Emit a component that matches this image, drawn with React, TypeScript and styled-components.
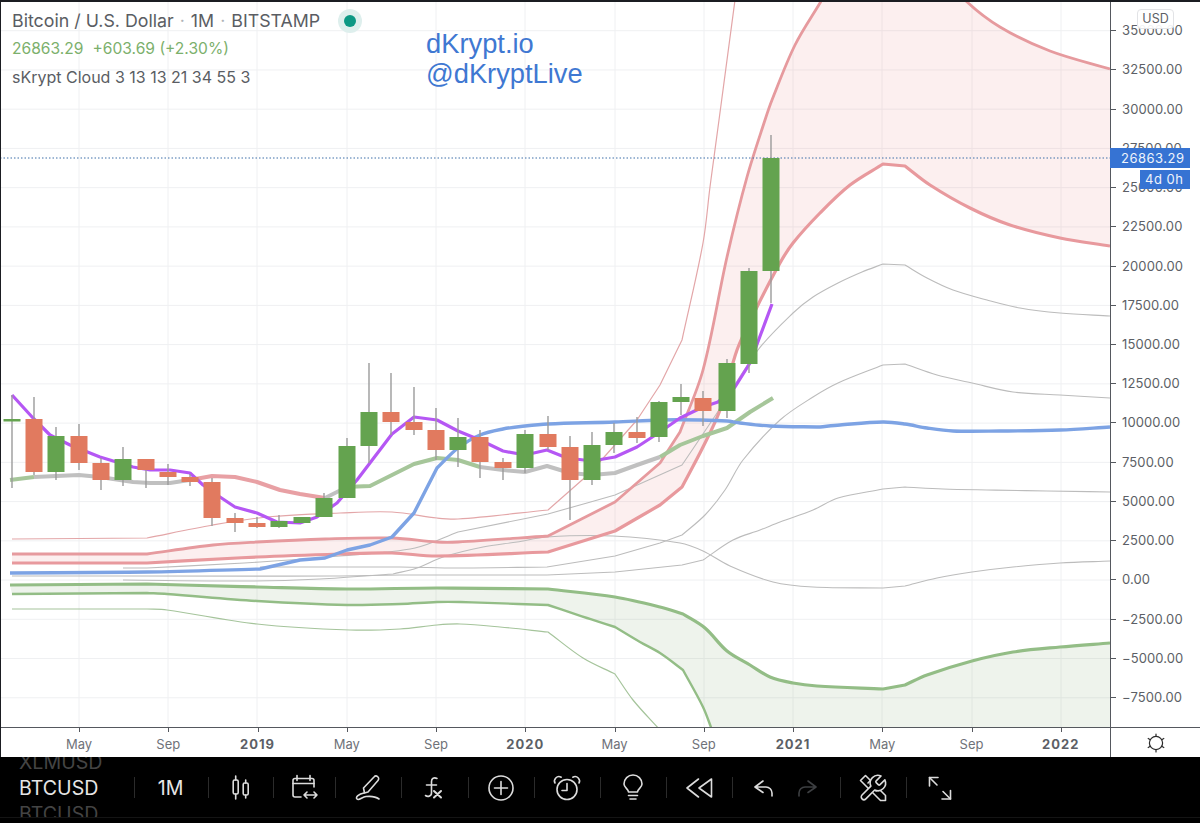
import React from "react";
import styled, { createGlobalStyle } from "styled-components";

const GlobalStyle = createGlobalStyle`
  html, body {
    margin: 0;
    padding: 0;
    background: #000;
    overflow: hidden;
  }
`;

const uiFont = `Inter, "Liberation Sans", sans-serif`;

const Screen = styled.div`
  width: 1200px;
  height: 823px;
  display: flex;
  flex-direction: column;
  background: #fff;
  font-family: ${uiFont};
  overflow: hidden;
`;

const Upper = styled.div`
  display: flex;
  flex-direction: column;
  height: 757px;
  border-top: 2px solid #1b1d22;
  border-left: 1px solid #1b1d22;
  box-sizing: border-box;
`;

const ChartRow = styled.div`
  display: flex;
  height: 725px;
`;

const Plot = styled.div`
  position: relative;
  width: 1109px;
  height: 725px;
  border-right: 1px solid #55585e;
`;

const Canvas = styled.svg`
  display: block;
`;

const Legend = styled.div`
  position: absolute;
  left: 11px;
  top: 8px;
  display: flex;
  flex-direction: column;
  color: #5a5d63;
`;

const TitleRow = styled.div`
  display: flex;
  align-items: center;
  height: 21px;
  font-size: 17.8px;
  white-space: nowrap;
`;

const Sep = styled.span`
  margin: 0 6px;
  color: #b0b3b8;
`;

const StatusDot = styled.span`
  width: 12px;
  height: 12px;
  margin-left: 24px;
  border-radius: 50%;
  background: #0d9884;
  box-shadow: 0 0 0 6px #deefed;
`;

const PriceRow = styled.div`
  display: flex;
  gap: 9px;
  margin-top: 8px;
  height: 18px;
  align-items: center;
  font-size: 15.6px;
  color: #7cb06c;
`;

const IndicatorRow = styled.div`
  margin-top: 11px;
  height: 18px;
  line-height: 18px;
  font-size: 16px;
  color: #5a5d63;
`;

const Watermark = styled.div`
  position: absolute;
  left: 425px;
  top: 27px;
  font-family: "Liberation Sans", Arial, sans-serif;
  font-size: 27.3px;
  line-height: 30px;
  color: #3f78d2;
`;

const PriceScale = styled.div`
  position: relative;
  flex: 1;
  padding-top: 9.1px;
`;

const PriceTick = styled.div`
  position: relative;
  height: 39.24px;
  line-height: 39.24px;
  padding-left: 11px;
  font-size: 13px;
  letter-spacing: 0.1px;
  color: #5c5f66;

  &::before {
    content: "";
    position: absolute;
    left: 0;
    top: 19px;
    width: 5px;
    height: 1px;
    background: #55585e;
  }
`;

const CurrencyBadge = styled.div`
  position: absolute;
  left: 26px;
  top: 7px;
  width: 37px;
  height: 20px;
  box-sizing: border-box;
  border: 1px solid #e2e3e6;
  border-radius: 4px;
  background: rgba(255, 255, 255, 0.92);
  font-size: 12.5px;
  line-height: 18px;
  text-align: center;
  color: #5c5f66;
`;

const PriceTag = styled.div<{ $wide?: boolean }>`
  position: absolute;
  right: 10px;
  top: ${(p) => (p.$wide ? "146px" : "168px")};
  width: ${(p) => (p.$wide ? "80px" : "50px")};
  height: ${(p) => (p.$wide ? "20px" : "19px")};
  line-height: ${(p) => (p.$wide ? "20px" : "19px")};
  box-sizing: border-box;
  padding-left: ${(p) => (p.$wide ? "11px" : "5px")};
  background: #3673d3;
  font-size: 13px;
  letter-spacing: 0.5px;
  color: #eef3fb;
`;

const TimeRow = styled.div`
  display: flex;
  height: 30px;
  border-top: 1.5px solid #55585e;
  box-sizing: border-box;
`;

const TimeAxis = styled.div`
  display: grid;
  grid-template-columns: repeat(12, 89.25px);
  width: 1110px;
  padding-left: 33.4px;
  box-sizing: border-box;
  border-right: 1px solid #55585e;
`;

const TimeLabel = styled.div<{ $year?: boolean }>`
  position: relative;
  padding-top: 9px;
  text-align: center;
  font-size: 13px;
  line-height: 15px;
  font-weight: ${(p) => (p.$year ? 700 : 400)};
  letter-spacing: ${(p) => (p.$year ? "1px" : "0")};
  color: ${(p) => (p.$year ? "#5c5f66" : "#6f7279")};

  &::before {
    content: "";
    position: absolute;
    left: 50%;
    top: 0;
    width: 1px;
    height: 4px;
    background: #55585e;
  }
`;

const SettingsCell = styled.div`
  flex: 1;
  display: flex;
  align-items: center;
  justify-content: center;
`;

const Toolbar = styled.div`
  height: 66px;
  background: #000;
`;

const Strip = styled.div`
  display: flex;
  align-items: center;
  height: 61px;
  border-bottom: 1px solid #141414;
  box-sizing: border-box;
`;

const SymbolRoller = styled.div`
  width: 134px;
  height: 100%;
  padding-left: 19px;
  padding-top: 1px;
  box-sizing: border-box;
  display: flex;
  flex-direction: column;
  justify-content: center;
  overflow: hidden;
  flex-shrink: 0;
`;

const SymbolLine = styled.div<{ $active?: boolean }>`
  flex-shrink: 0;
  height: 26px;
  line-height: 26px;
  font-size: 19.6px;
  color: ${(p) => (p.$active ? "#e6e6e6" : "#444")};
`;

const ToolCell = styled.div<{ $w: number }>`
  width: ${(p) => p.$w}px;
  box-sizing: border-box;
  padding-right: 2px;
  padding-top: 1px;
  flex-shrink: 0;
  display: flex;
  align-items: center;
  justify-content: center;
  gap: 11px;
  font-size: 19.6px;
  color: #e6e6e6;
`;

const Divider = styled.div`
  width: 1px;
  height: 21px;
  flex-shrink: 0;
  background: #2b2b2b;
`;

const ToolIcon = styled.svg<{ $dim?: boolean }>`
  display: block;
  flex-shrink: 0;
  fill: none;
  stroke: ${(p) => (p.$dim ? "#3d3f42" : "#dcdcdc")};
  stroke-width: 1.6;
  stroke-linecap: round;
  stroke-linejoin: round;
`;

const Wick = styled.line`
  stroke: #9b9b9b;
  stroke-width: 1.4;
`;

const CandleBody = styled.rect<{ $up: boolean }>`
  fill: ${(p) => (p.$up ? "#64a34f" : "#e17a5f")};
`;

const Series = styled.path<{ $color: string; $w: number }>`
  fill: none;
  stroke: ${(p) => p.$color};
  stroke-width: ${(p) => p.$w};
  stroke-linejoin: round;
`;

const Cloud = styled.path<{ $color: string }>`
  fill: ${(p) => p.$color};
`;

const GridLine = styled.line`
  stroke: #eff0f2;
  stroke-width: 1;
`;

const LastPriceLine = styled.line`
  stroke: #3d6fa8;
  stroke-width: 1;
  stroke-dasharray: 1.5 2;
`;

const priceY = Array.from({ length: 18 }, (_, i) => 30.7 + i * 39.24);
const priceLabels = [
  "35000.00", "32500.00", "30000.00", "27500.00", "25000.00", "22500.00",
  "20000.00", "17500.00", "15000.00", "12500.00", "10000.00", "7500.00",
  "5000.00", "2500.00", "0.00", "−2500.00", "−5000.00", "−7500.00",
];
const timeLabels = ["May", "Sep", "2019", "May", "Sep", "2020", "May", "Sep", "2021", "May", "Sep", "2022"];
const timeX = [79, 168, 257, 347, 436, 525, 615, 704, 793, 882, 972, 1061];

// x, body top, body bottom, wick top, wick bottom, up
const candles: [number, number, number, number, number, boolean][] = [
  [12, 419, 421.5, 395, 488, true],
  [34, 419, 472, 397, 475, false],
  [56, 436, 472, 427, 480, true],
  [79, 436, 463, 424, 470, false],
  [101, 463, 480, 458, 490, false],
  [123, 459, 480, 447, 486, true],
  [146, 459, 470, 459, 488, false],
  [168, 472, 477, 464, 485, false],
  [190, 477, 482, 474, 486, false],
  [212, 482, 518, 478, 526, false],
  [235, 518, 523, 513, 532, false],
  [257, 523, 527, 517, 528, false],
  [279, 521, 527, 515, 528, true],
  [302, 517, 523, 517, 523, true],
  [324, 498, 517, 493, 517, true],
  [347, 446, 498, 438, 498, true],
  [369, 412, 446, 363, 463, true],
  [391, 412, 422, 373, 435, false],
  [414, 422, 430, 387, 435, false],
  [436, 430, 450, 408, 460, false],
  [458, 437, 450, 418, 467, true],
  [480, 437, 462, 430, 478, false],
  [503, 462, 468, 458, 480, false],
  [525, 434, 468, 430, 473, true],
  [548, 434, 447, 416, 450, false],
  [570, 447, 480, 436, 520, false],
  [592, 445, 480, 432, 485, true],
  [614, 432, 445, 423, 453, true],
  [637, 432, 438, 417, 443, false],
  [659, 402, 437, 401, 442, true],
  [681, 397, 402, 384, 415, true],
  [703, 398, 411, 391, 426, false],
  [727, 363, 411, 359, 418, true],
  [749, 271, 364, 268, 373, true],
  [771, 158, 271, 135, 303, true],
];

// "|" marks a corner: the curve restarts from the point before it
const redUpper = "12,554 147,554|213,545 257,542 325,539 392,538 437,542 458,542 548,536|615,502|660,463|680,432|703,370 727,257 747,177 765,120 772,100 795,45 820,3 840,-30 883,-50 940,-30 965,0 1000,27 1050,51 1110,69";
const redLower = "12,563 147,563|257,557 340,554 392,553 437,556 548,552|615,531|660,505|682,487|703,447 720,410 737,350 757,307 780,263 793,243 820,213 850,185 883,164|905,166|930,185 970,208 1010,225 1060,238 1110,246";
const greenUpper = "10,585 147,584|257,587 347,589 437,588 548,589|615,597 660,607 683,614|705,628 727,651 750,665 770,677 793,683 817,686 883,689|905,685|927,675 972,661 1013,652 1060,647 1110,643";
const greenLower = "12,594 147,593|167,594 257,601 347,605 400,604 437,602 460,602 548,605|587,618 615,627|640,642 660,653 683,670|703,707 712,730";

const purple = "12,395 33,418 50,435 70,445 100,457 133,467 150,470 170,470 190,473 203,485 220,497 235,507 257,513 277,522 300,523 317,517 337,503 357,480 392,434 414,417 437,420 458,431 480,440 503,451 525,455 547,450 567,458 592,461 615,457 637,447 660,432 680,418 703,407 718,402 735,387 750,363 772,304";
const blue = "10,573 147,572 260,569|300,560|325,558|347,550|370,545|392,537|414,513|437,468|458,448 480,435 503,429 525,426 548,424 615,422 660,420 700,420 727,421 740,423 770,426 820,427|840,425 883,422 905,424 927,428 953,431 1000,431 1060,430 1110,427";
const midLine: [string, string][] = [
  ["10,480 34,477", "#a6c69a"],
  ["34,477 79,475 100,477 133,482 150,483 170,483 196,479", "#c0c0c0"],
  ["190,480 212,476 235,477 257,482 280,490 300,494 325,498", "#e8a0a4"],
  ["325,498 345,488", "#c0c0c0"],
  ["345,487 370,486 392,475 414,464 437,458 458,460 480,467", "#a6c69a"],
  ["480,467 503,470 525,472 547,466 570,473 592,475 615,473 637,465 660,457", "#c0c0c0"],
  ["660,457 680,445 703,436 727,428 750,412 773,398", "#a6c69a"],
];

const redThin = "12,539 147,538|213,525 267,517 340,513 392,512 437,518 458,519 548,510|590,473|637,420|660,385|682,340|703,243 710,187 719,120 735,0";
const greenThin = "12,609 147,609|167,610 257,624 350,630 400,629 437,625 460,624 500,627 548,632|583,658 615,674|633,700 660,730";
const greyLines = [
  "123,568 147,568|260,562 340,556 415,548 458,532|548,514|615,495|682,465|717,413 758,350 793,313 813,297 838,283 862,272 883,264|905,265|927,278 953,290 987,300 1020,308 1060,313 1110,316",
  "123,580 253,581 320,579 393,574|417,568 443,557 483,547 517,542 547,537 613,536 680,543 703,551 730,566 773,582 813,587 883,588|905,586|937,578 972,572 1013,567 1060,563 1110,561",
  "12,576 333,576 400,575 547,575|615,572|682,565|703,560|733,540 760,530 780,522 813,510 838,498 883,489|905,487|943,489 987,490 1047,491 1110,492",
  "260,567 400,567 457,568 547,567|615,556|660,543|682,535|705,515 725,490 743,460 780,420 813,397 838,383 883,365|905,364|937,375 972,383 1013,392 1060,395 1110,398",
];

type Pt = [number, number];

const parse = (s: string): Pt[] => s.trim().split(" ").map((p) => p.split(",").map(Number) as Pt);

const straight = (s: string) => "M" + s.replace(/ /g, " L");

function pieces(s: string): Pt[][] {
  const parts = s.split("|").map(parse);
  return parts.map((p, i) => (i ? [parts[i - 1][parts[i - 1].length - 1], ...p] : p));
}

function curve(pts: Pt[]) {
  let d = "";
  const tangent = (i: number): Pt => {
    const a = pts[Math.max(i - 1, 0)];
    const b = pts[Math.min(i + 1, pts.length - 1)];
    const len = Math.hypot(b[0] - a[0], b[1] - a[1]) || 1;
    return [(b[0] - a[0]) / len, (b[1] - a[1]) / len];
  };
  for (let i = 0; i < pts.length - 1; i++) {
    const p = pts[i];
    const q = pts[i + 1];
    const k = Math.hypot(q[0] - p[0], q[1] - p[1]) / 3;
    const t0 = tangent(i);
    const t1 = tangent(i + 1);
    d += ` C${p[0] + t0[0] * k},${p[1] + t0[1] * k} ${q[0] - t1[0] * k},${q[1] - t1[1] * k} ${q[0]},${q[1]}`;
  }
  return d;
}

const follow = (parts: Pt[][]) => parts.map(curve).join("");

function smooth(s: string) {
  const parts = pieces(s);
  return `M${parts[0][0][0]},${parts[0][0][1]}${follow(parts)}`;
}

// band between two curves: top edge forward, bottom edge back
function band(top: string, bottom: string, extra = "") {
  const back = pieces(bottom).reverse().map((p) => [...p].reverse());
  return `${smooth(top)}${extra} L${back[0][0][0]},${back[0][0][1]}${follow(back)} Z`;
}

function Icon({ children, dim }: { children: React.ReactNode; dim?: boolean }) {
  return (
    <ToolIcon width="32" height="32" viewBox="0 0 32 32" $dim={dim}>
      {children}
    </ToolIcon>
  );
}

function Chart() {
  return (
    <Canvas width="1109" height="725" viewBox="1 2 1109 725">
      {priceY.map((y) => (
        <GridLine key={y} x1="0" x2="1110" y1={y} y2={y} />
      ))}
      {timeX.map((x) => (
        <GridLine key={x} x1={x} x2={x} y1="0" y2="727" />
      ))}
      <Cloud d={band(redUpper, redLower)} $color="rgba(232, 130, 135, 0.13)" />
      <Cloud d={band(greenUpper, greenLower, " L1110,730")} $color="rgba(120, 165, 110, 0.13)" />

      {greyLines.map((line) => (
        <Series key={line} d={smooth(line)} $color="#bcbcbc" $w={1.1} />
      ))}
      <Series d={smooth(redThin)} $color="#e3a6a8" $w={1.2} />
      <Series d={smooth(greenThin)} $color="#a5c49b" $w={1.2} />
      <Series d={smooth(redUpper)} $color="#e69a9e" $w={2.8} />
      <Series d={smooth(redLower)} $color="#e8999d" $w={3.2} />
      <Series d={smooth(greenUpper)} $color="#93bd86" $w={3.2} />
      <Series d={smooth(greenLower)} $color="#93bd86" $w={2.4} />

      <LastPriceLine x1="0" x2="1110" y1="158" y2="158" />

      {midLine.map(([points, color]) => (
        <Series key={points} d={straight(points)} $color={color} $w={4} />
      ))}
      <Series d={smooth(blue)} $color="#7da3e4" $w={3.4} />
      <Series d={straight(purple)} $color="#b557f4" $w={3.2} />

      {candles.map(([x, top, bottom, wickTop, wickBottom, up]) => (
        <g key={x}>
          <Wick x1={x} x2={x} y1={wickTop} y2={wickBottom} />
          <CandleBody x={x - 8.5} y={top} width="17" height={bottom - top} $up={up} />
        </g>
      ))}
    </Canvas>
  );
}

function Gear() {
  return (
    <svg width="24" height="24" viewBox="0 0 24 24" fill="none" stroke="#2a2a2a" strokeWidth="1.2" strokeLinecap="round">
      <circle cx="12" cy="12" r="6.6" />
      <path d="M12 3v2.400M12 18.600V21M4.200 7.500l2.100 1.200M17.700 15.300l2.100 1.200M4.200 16.500l2.100-1.200M17.700 8.700l2.100-1.200" />
    </svg>
  );
}

export default function App() {
  return (
    <Screen>
      <GlobalStyle />
      <Upper>
        <ChartRow>
          <Plot>
            <Chart />
            <Legend>
              <TitleRow>
                Bitcoin / U.S. Dollar<Sep>·</Sep>1M<Sep>·</Sep>BITSTAMP
                <StatusDot />
              </TitleRow>
              <PriceRow>
                <span>26863.29</span>
                <span>+603.69 (+2.30%)</span>
              </PriceRow>
              <IndicatorRow>sKrypt Cloud 3 13 13 21 34 55 3</IndicatorRow>
            </Legend>
            <Watermark>
              dKrypt.io
              <br />
              @dKryptLive
            </Watermark>
          </Plot>
          <PriceScale>
            {priceLabels.map((label) => (
              <PriceTick key={label}>{label}</PriceTick>
            ))}
            <CurrencyBadge>USD</CurrencyBadge>
            <PriceTag $wide>26863.29</PriceTag>
            <PriceTag>4d 0h</PriceTag>
          </PriceScale>
        </ChartRow>
        <TimeRow>
          <TimeAxis>
            {timeLabels.map((label, i) => (
              <TimeLabel key={i} $year={label.startsWith("20")}>
                {label}
              </TimeLabel>
            ))}
          </TimeAxis>
          <SettingsCell>
            <Gear />
          </SettingsCell>
        </TimeRow>
      </Upper>
      <Toolbar>
        <Strip>
          <SymbolRoller>
            <SymbolLine>XLMUSD</SymbolLine>
            <SymbolLine $active>BTCUSD</SymbolLine>
            <SymbolLine>BTCUSD</SymbolLine>
          </SymbolRoller>
          <Divider />
          <ToolCell $w={73}>1M</ToolCell>
          <Divider />
          <ToolCell $w={64}>
            <Icon>
              <path d="M11.700 4v4M11.700 22v5M21.700 8v3M21.700 23v3" />
              <rect x="9.200" y="8" width="5" height="14" rx="1.500" />
              <rect x="19.200" y="11" width="5" height="12" rx="1.500" />
            </Icon>
          </ToolCell>
          <Divider />
          <ToolCell $w={61}>
            <Icon>
              <path d="M26 15V8.500a2 2 0 0 0-2-2H7a2 2 0 0 0-2 2V23a2 2 0 0 0 2 2h6" />
              <path d="M5 11.500h21M9 3.500v5M22 3.500v5" />
              <path d="M16 23h13M19 20l-3 3 3 3M26 20l3 3-3 3" />
            </Icon>
          </ToolCell>
          <Divider />
          <ToolCell $w={65}>
            <Icon>
              <path d="M12.500 21l-1-5L22 5a2.600 2.600 0 0 1 4 3.500L16 20z" />
              <path d="M12 21C7 22 3 25 5 27c2 2 5-2 9-2.500 5-.5 9-.5 13 2.500" />
            </Icon>
          </ToolCell>
          <Divider />
          <ToolCell $w={66}>
            <Icon>
              <path d="M19 6.500C16 5 13.500 6.500 13.500 9.500V21c0 3.500-4 4-6 2.500M8.500 13h10" />
              <path d="M16 19l7 6.500M23 19l-7 6.500" strokeWidth="2" />
            </Icon>
          </ToolCell>
          <Divider />
          <ToolCell $w={65}>
            <Icon>
              <circle cx="16" cy="16" r="12" />
              <path d="M16 9.500v13M9.500 16h13" />
            </Icon>
          </ToolCell>
          <Divider />
          <ToolCell $w={65}>
            <Icon>
              <circle cx="16" cy="17.500" r="10" />
              <path d="M16 11.500v7h-5" />
              <path d="M4 11C2 7.500 6 3 10.200 5.200M28 11c2-3.500-2-8-6.200-5.800" />
            </Icon>
          </ToolCell>
          <Divider />
          <ToolCell $w={65}>
            <Icon>
              <path d="M11.500 20c0-3-4.500-4.500-4.500-8a9 9 0 0 1 18 0c0 3.500-4.500 5-4.500 8z" />
              <path d="M11.500 23.500h9M13 27h6" />
            </Icon>
          </ToolCell>
          <Divider />
          <ToolCell $w={65}>
            <Icon>
              <path d="M15.500 7L4 16l11.500 9" />
              <path d="M28.500 7v18L16 16z" />
            </Icon>
          </ToolCell>
          <Divider />
          <ToolCell $w={107}>
            <Icon>
              <path d="M15 9l-8 6 8 5.500M7 15h11a6 6 0 0 1 6 6v3" />
            </Icon>
            <Icon dim>
              <path d="M17 9l8 6-8 5.500M25 15H14a6 6 0 0 0-6 6v3" />
            </Icon>
          </ToolCell>
          <Divider />
          <ToolCell $w={65}>
            <Icon>
              <path d="M3.500 8.500l5-5L28.500 23.500v5h-5z" />
              <path d="M11 11l2.500-2.500M15 15l2.500-2.500M19 19l2.500-2.500" />
              <g transform="scale(1.28) translate(0.3 0.6)" strokeWidth="1.25" fill="#000">
                <path d="M14.700 6.300a1 1 0 0 0 0 1.400l1.600 1.600a1 1 0 0 0 1.400 0l3.770-3.770a6 6 0 0 1-7.940 7.940l-6.910 6.910a2.120 2.120 0 0 1-3-3l6.910-6.910a6 6 0 0 1 7.940-7.940l-3.760 3.760z" />
              </g>
            </Icon>
          </ToolCell>
          <Divider />
          <ToolCell $w={67}>
            <Icon>
              <path d="M5.500 5.500l7.500 7.500M19 19.500l7.500 7.500" />
              <path d="M5.500 14V5.500H14M26.500 18.500V27H18" />
            </Icon>
          </ToolCell>
        </Strip>
      </Toolbar>
    </Screen>
  );
}
